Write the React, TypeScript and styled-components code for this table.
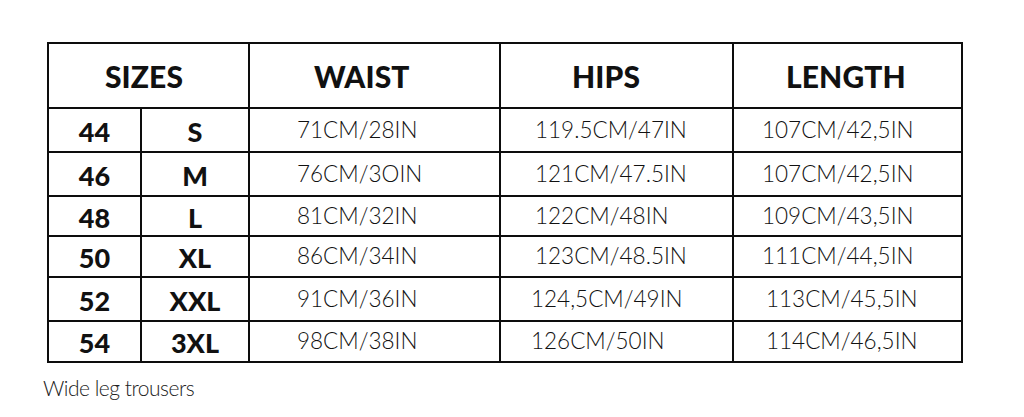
import React from "react";
import styled, { createGlobalStyle } from "styled-components";

const Global = createGlobalStyle`
  html, body { margin: 0; padding: 0; background: #ffffff; }
  body { font-family: "Lato", "Liberation Sans", sans-serif; color: #111; }
`;

const Page = styled.div`
  width: 1024px;
  height: 417px;
  padding: 42px 0 0 47px;
  box-sizing: border-box;
  overflow: hidden;
`;

const Table = styled.div`
  display: grid;
  grid-template-columns: 91px 106px 249px 231px 227px;
  grid-template-rows: 63px 42px 42px 38px 39px 42px 39px;
  gap: 2px;
  padding: 2px;
  width: 916px;
  box-sizing: border-box;
  background: #0d0d0d;
`;

const Cell = styled.div<{ $span?: number; $indent?: number; $center?: boolean }>`
  background: #fff;
  display: flex;
  align-items: center;
  justify-content: ${(p) => (p.$center ? "center" : "flex-start")};
  padding-left: ${(p) => p.$indent ?? 0}px;
  grid-column: span ${(p) => p.$span ?? 1};
  box-sizing: border-box;
  white-space: nowrap;
`;

const HeadText = styled.span<{ $shift?: number }>`
  font-weight: 900;
  font-size: 30px;
  letter-spacing: 0.1px;
  line-height: 1;
  margin-right: ${(p) => p.$shift ?? 0}px;
`;

const SizeText = styled.span`
  font-weight: 900;
  font-size: 27px;
  line-height: 1;
  padding-top: 2px;
`;

const DataText = styled.span`
  font-weight: 300;
  font-size: 22.5px;
  line-height: 1;
`;

const Caption = styled.div`
  margin: 12px 0 0 -4px;
  font-weight: 300;
  font-size: 21px;
  letter-spacing: -0.5px;
  color: #222;
`;

type Row = {
  eu: string;
  size: string;
  waist: string;
  hips: string;
  hipsIndent: number;
  length: string;
  lengthIndent: number;
};

const rows: Row[] = [
  { eu: "44", size: "S", waist: "71CM/28IN", hips: "119.5CM/47IN", hipsIndent: 34, length: "107CM/42,5IN", lengthIndent: 28 },
  { eu: "46", size: "M", waist: "76CM/3OIN", hips: "121CM/47.5IN", hipsIndent: 34, length: "107CM/42,5IN", lengthIndent: 28 },
  { eu: "48", size: "L", waist: "81CM/32IN", hips: "122CM/48IN", hipsIndent: 34, length: "109CM/43,5IN", lengthIndent: 28 },
  { eu: "50", size: "XL", waist: "86CM/34IN", hips: "123CM/48.5IN", hipsIndent: 34, length: "111CM/44,5IN", lengthIndent: 28 },
  { eu: "52", size: "XXL", waist: "91CM/36IN", hips: "124,5CM/49IN", hipsIndent: 30, length: "113CM/45,5IN", lengthIndent: 32 },
  { eu: "54", size: "3XL", waist: "98CM/38IN", hips: "126CM/50IN", hipsIndent: 30, length: "114CM/46,5IN", lengthIndent: 32 },
];

export default function App() {
  return (
    <>
      <Global />
      <Page>
        <Table>
          <Cell $span={2} $center>
            <HeadText $shift={9}>SIZES</HeadText>
          </Cell>
          <Cell $indent={64}>
            <HeadText>WAIST</HeadText>
          </Cell>
          <Cell $indent={71}>
            <HeadText>HIPS</HeadText>
          </Cell>
          <Cell $indent={52}>
            <HeadText>LENGTH</HeadText>
          </Cell>
          {rows.map((r) => (
            <React.Fragment key={r.eu}>
              <Cell $center>
                <SizeText>{r.eu}</SizeText>
              </Cell>
              <Cell $center>
                <SizeText>{r.size}</SizeText>
              </Cell>
              <Cell $indent={47}>
                <DataText>{r.waist}</DataText>
              </Cell>
              <Cell $indent={r.hipsIndent}>
                <DataText>{r.hips}</DataText>
              </Cell>
              <Cell $indent={r.lengthIndent}>
                <DataText>{r.length}</DataText>
              </Cell>
            </React.Fragment>
          ))}
        </Table>
        <Caption>Wide leg trousers</Caption>
      </Page>
    </>
  );
}
